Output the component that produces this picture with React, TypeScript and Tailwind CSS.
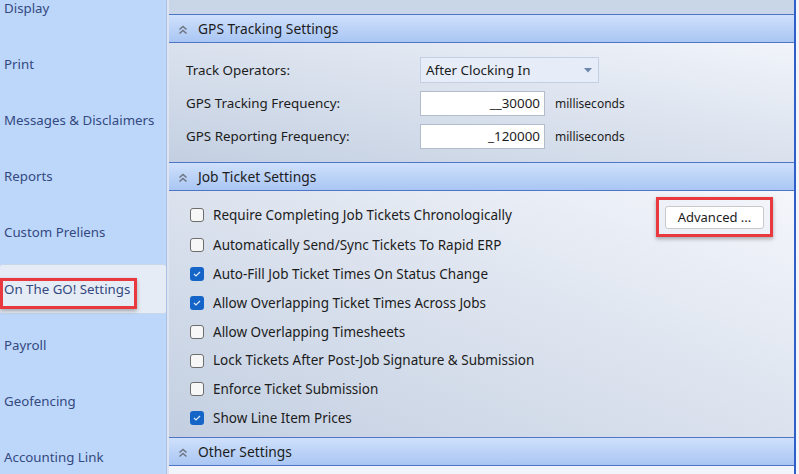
import React from "react";

const navItems = [
  "Display",
  "Print",
  "Messages & Disclaimers",
  "Reports",
  "Custom Preliens",
  "On The GO! Settings",
  "Payroll",
  "Geofencing",
  "Accounting Link",
];

const tickets: { label: string; checked: boolean }[] = [
  { label: "Require Completing Job Tickets Chronologically", checked: false },
  { label: "Automatically Send/Sync Tickets To Rapid ERP", checked: false },
  { label: "Auto-Fill Job Ticket Times On Status Change", checked: true },
  { label: "Allow Overlapping Ticket Times Across Jobs", checked: true },
  { label: "Allow Overlapping Timesheets", checked: false },
  { label: "Lock Tickets After Post-Job Signature & Submission", checked: false },
  { label: "Enforce Ticket Submission", checked: false },
  { label: "Show Line Item Prices", checked: true },
];

function Chevrons() {
  return (
    <svg width="10" height="10" viewBox="0 0 10 10" className="shrink-0">
      <path d="M1.5 4.5 L5 1.5 L8.5 4.5" fill="none" stroke="#6f7784" strokeWidth="1.6" />
      <path d="M1.5 8.5 L5 5.5 L8.5 8.5" fill="none" stroke="#6f7784" strokeWidth="1.6" />
    </svg>
  );
}

function SectionHeader({ title }: { title: string }) {
  return (
    <div className="flex h-[29px] shrink-0 items-center gap-[10px] border-y border-[#4f76c6] bg-linear-to-b from-[#cfe0fb] to-[#a9c6f3] pl-[9px] pt-[2px] text-[13.8px] text-[#1c1c1c]">
      <Chevrons />
      <span>{title}</span>
    </div>
  );
}

function Checkbox({ checked }: { checked: boolean }) {
  if (checked)
    return (
      <span className="flex h-[14px] w-[14px] shrink-0 items-center justify-center rounded-[3px] bg-[#1565c9]">
        <svg width="8" height="6" viewBox="0 0 8 6">
          <path d="M1 3 L3 5 L7 1" fill="none" stroke="#dce8fb" strokeWidth="1.2" />
        </svg>
      </span>
    );
  return <span className="h-[14px] w-[14px] shrink-0 rounded-[3px] border border-[#6d6d6d] bg-[#f7f7f7]" />;
}

export default function App() {
  return (
    <div
      className="flex h-[474px] w-[799px] overflow-hidden bg-[#f3f6fb]"
      style={{ fontFamily: '"Noto Sans", "Open Sans", sans-serif' }}
    >
      {/* sidebar */}
      <div className="w-[167px] shrink-0 overflow-hidden border-r border-[#a9c2e6] bg-[#bdd7fb]">
        <div className="-mt-[19.5px] flex flex-col">
          {navItems.map((n, i) => {
            const sel = i === 5;
            return (
              <div
                key={n}
                className={
                  sel
                    ? "relative my-[3px] flex h-[50px] items-center rounded-[3px] border-y border-[#c8d6ea] bg-[#e6ecf6] pl-[4px] pt-[2px] text-[13.3px] text-[#34497f]"
                    : "flex h-[56.2px] items-center pl-[4px] text-[13.3px] text-[#34497f]"
                }
              >
                {n}
                {sel && (
                  <div className="absolute left-0 top-[13px] h-[31px] w-[137px] border-[3px] border-[#e8393f] shadow-[0_2px_4px_rgba(0,0,0,0.3)]" />
                )}
              </div>
            );
          })}
        </div>
      </div>

      <div className="w-[2px] shrink-0 bg-[#dde4ef]" />

      {/* content */}
      <div className="flex w-[627px] shrink-0 flex-col border-r-2 border-[#2f5fc8] text-[#1c1c1c]">
        <div className="h-[14px] shrink-0 bg-[#c9d6e7]" />
        <SectionHeader title="GPS Tracking Settings" />
        <div className="flex h-[119px] shrink-0 flex-col gap-[8px] bg-linear-to-tr from-[#c3cfe1] to-[#f1f4fa] pl-[17px] pt-[14px] text-[13.4px]">
          <div className="flex items-center">
            <span className="w-[234px]">Track Operators:</span>
            <div className="flex h-[26px] w-[179px] items-center justify-between border border-[#c3d0e3] bg-[#e6edf8] pl-[5px] pr-[6px]">
              <span>After Clocking In</span>
              <svg width="8" height="5" viewBox="0 0 8 5">
                <path d="M0 0 H8 L4 4.5 Z" fill="#6f87ad" />
              </svg>
            </div>
          </div>
          <div className="flex items-center">
            <span className="w-[234px]">GPS Tracking Frequency:</span>
            <div className="flex h-[25px] w-[125px] items-center justify-end border border-[#b3bccb] bg-white pr-[4px]">
              __30000
            </div>
            <span className="ml-[10px] text-[12px]">milliseconds</span>
          </div>
          <div className="flex items-center">
            <span className="w-[234px]">GPS Reporting Frequency:</span>
            <div className="flex h-[25px] w-[125px] items-center justify-end border border-[#b3bccb] bg-white pr-[4px]">
              _120000
            </div>
            <span className="ml-[10px] text-[12px]">milliseconds</span>
          </div>
        </div>
        <SectionHeader title="Job Ticket Settings" />
        <div className="flex h-[246px] shrink-0 bg-linear-to-tr from-[#c3cfe1] to-[#f4f6fb] pl-[21px] pt-[8px] text-[13.5px]">
          <div className="flex flex-1 flex-col">
            {tickets.map((t, i) => (
              <div key={t.label} className={`flex items-center gap-[9px] ${i === 0 ? "h-[32px]" : "h-[28.8px]"}`}>
                <Checkbox checked={t.checked} />
                <span>{t.label}</span>
              </div>
            ))}
          </div>
          <div className="-mt-[2px] mr-[21px] self-start border-[3px] border-[#e8393f] pb-[5px] pl-[6px] pr-[6px] pt-[6px] shadow-[0_2px_4px_rgba(0,0,0,0.3)]">
            <div className="flex h-[23px] w-[99px] items-center justify-center rounded-[3px] border border-[#c9c9c9] bg-white text-[13px]">
              Advanced ...
            </div>
          </div>
        </div>
        <SectionHeader title="Other Settings" />
        <div className="flex-1 bg-[#f1f4fa]" />
      </div>
      <div className="flex-1 bg-[#f4f6fa]" />
    </div>
  );
}
